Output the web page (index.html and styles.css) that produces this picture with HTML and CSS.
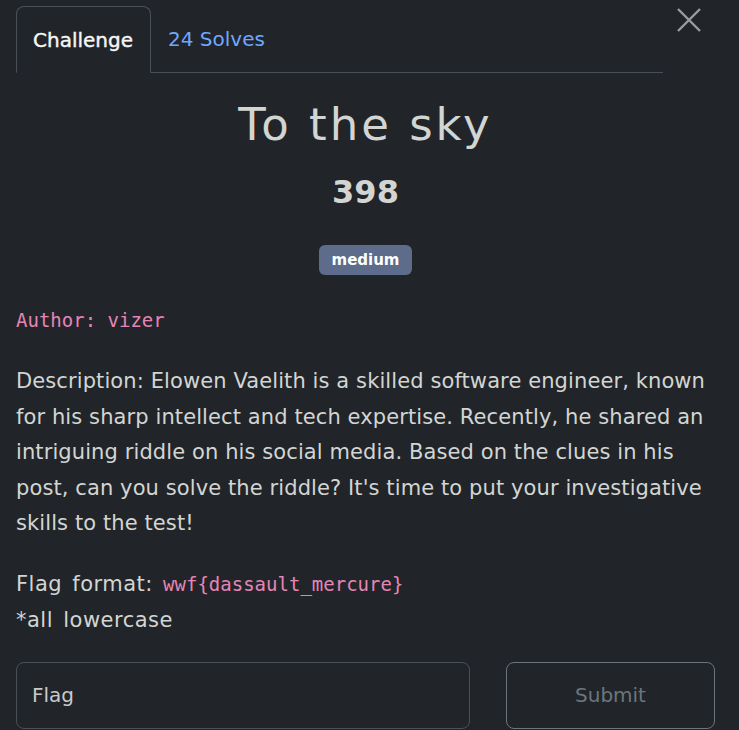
FILE: index.html
```html
<!DOCTYPE html>
<html>
<head>
<meta charset="utf-8">
<link rel="stylesheet" href="styles.css">
</head>
<body>
<div class="modal">
  <div class="header">
    <ul class="tabs">
      <li class="tab active">Challenge</li>
      <li class="tab link">24 Solves</li>
    </ul>
    <button class="close" aria-label="Close">
      <svg width="26" height="26" viewBox="0 0 26 26"><path d="M2 2 L24 24 M24 2 L2 24" stroke="#9a9c9e" stroke-width="2.4" fill="none"/></svg>
    </button>
  </div>
  <h1 class="title">To the sky</h1>
  <div class="value">398</div>
  <div class="badge-row"><span class="badge">medium</span></div>
  <p class="author"><code>Author: vizer</code></p>
  <p class="desc">Description: Elowen Vaelith is a skilled software engineer, known for his sharp intellect and tech expertise. Recently, he shared an intriguing riddle on his social media. Based on the clues in his post, can you solve the riddle? It's time to put your investigative skills to the test!</p>
  <p class="flag">Flag format: <code>wwf{dassault_mercure}</code><br>*all lowercase</p>
  <div class="submit-row">
    <div class="input">Flag</div>
    <div class="btn">Submit</div>
  </div>
</div>
</body>
</html>
```
FILE: styles.css
```css
html, body {
  margin: 0;
  padding: 0;
  background: #212529;
}
body {
  font-family: "DejaVu Sans", sans-serif;
  color: #d3d5d3;
}
.modal {
  width: 739px;
  height: 730px;
  box-sizing: border-box;
  padding: 6px 24px 0 16px;
  overflow: hidden;
}
.header {
  display: flex;
  align-items: flex-start;
}
.tabs {
  list-style: none;
  margin: 0;
  padding: 0;
  display: flex;
  width: 647px;
  border-bottom: 1px solid #495057;
}
.tab {
  height: 66px;
  box-sizing: border-box;
  padding: 0 16px;
  display: flex;
  align-items: center;
  font-size: 20px;
  border: 1px solid transparent;
  border-radius: 8px 8px 0 0;
  margin-bottom: -1px;
}
.tab.active {
  color: #f6f6f6;
  border-color: #495057;
  border-bottom-color: #212529;
  width: 135px;
  height: 67px;
  -webkit-text-stroke: 0.4px #f6f6f6;
}
.tab.link {
  color: #6ea8fe;
}
.close {
  background: none;
  border: 0;
  margin: 0;
  padding: 0;
  width: 52px;
  height: 28px;
  display: flex;
  justify-content: center;
  align-items: center;
}
.title {
  margin: 24px 0 0;
  text-align: center;
  font-size: 45px;
  font-weight: 400;
  line-height: 56px;
  letter-spacing: 3px;
}
.value {
  text-align: center;
  font-size: 32px;
  font-weight: 700;
  line-height: 44px;
  margin-top: 17px;
}
.badge-row {
  display: flex;
  justify-content: center;
  margin-top: 31px;
}
.badge {
  background: #5c6c8a;
  color: #fff;
  font-weight: 700;
  font-size: 15px;
  border-radius: 6px;
  width: 93px;
  height: 30px;
  display: flex;
  align-items: center;
  justify-content: center;
}
code {
  font-family: "DejaVu Sans Mono", "Liberation Mono", monospace;
  color: #e685b5;
  font-size: 19px;
  letter-spacing: 0;
}
.author {
  margin: 34px 0 0;
  line-height: 22px;
}
.desc {
  margin: 31px 0 0;
  font-size: 21px;
  letter-spacing: 0.1px;
  line-height: 35.5px;
}
.flag {
  margin: 24px 0 0;
  font-size: 21px;
  letter-spacing: 0.5px;
  word-spacing: 3px;
  line-height: 36px;
}
.submit-row {
  display: flex;
  gap: 36px;
  margin-top: 24px;
}
.input {
  width: 454px;
  height: 67px;
  box-sizing: border-box;
  border: 1px solid #495057;
  border-radius: 8px;
  padding-left: 15px;
  display: flex;
  align-items: center;
  font-size: 20px;
  color: #c8cacc;
}
.btn {
  width: 209px;
  height: 67px;
  box-sizing: border-box;
  border: 1px solid #6c757d;
  border-radius: 8px;
  display: flex;
  align-items: center;
  justify-content: center;
  font-size: 20px;
  color: #6c757d;
}
```
